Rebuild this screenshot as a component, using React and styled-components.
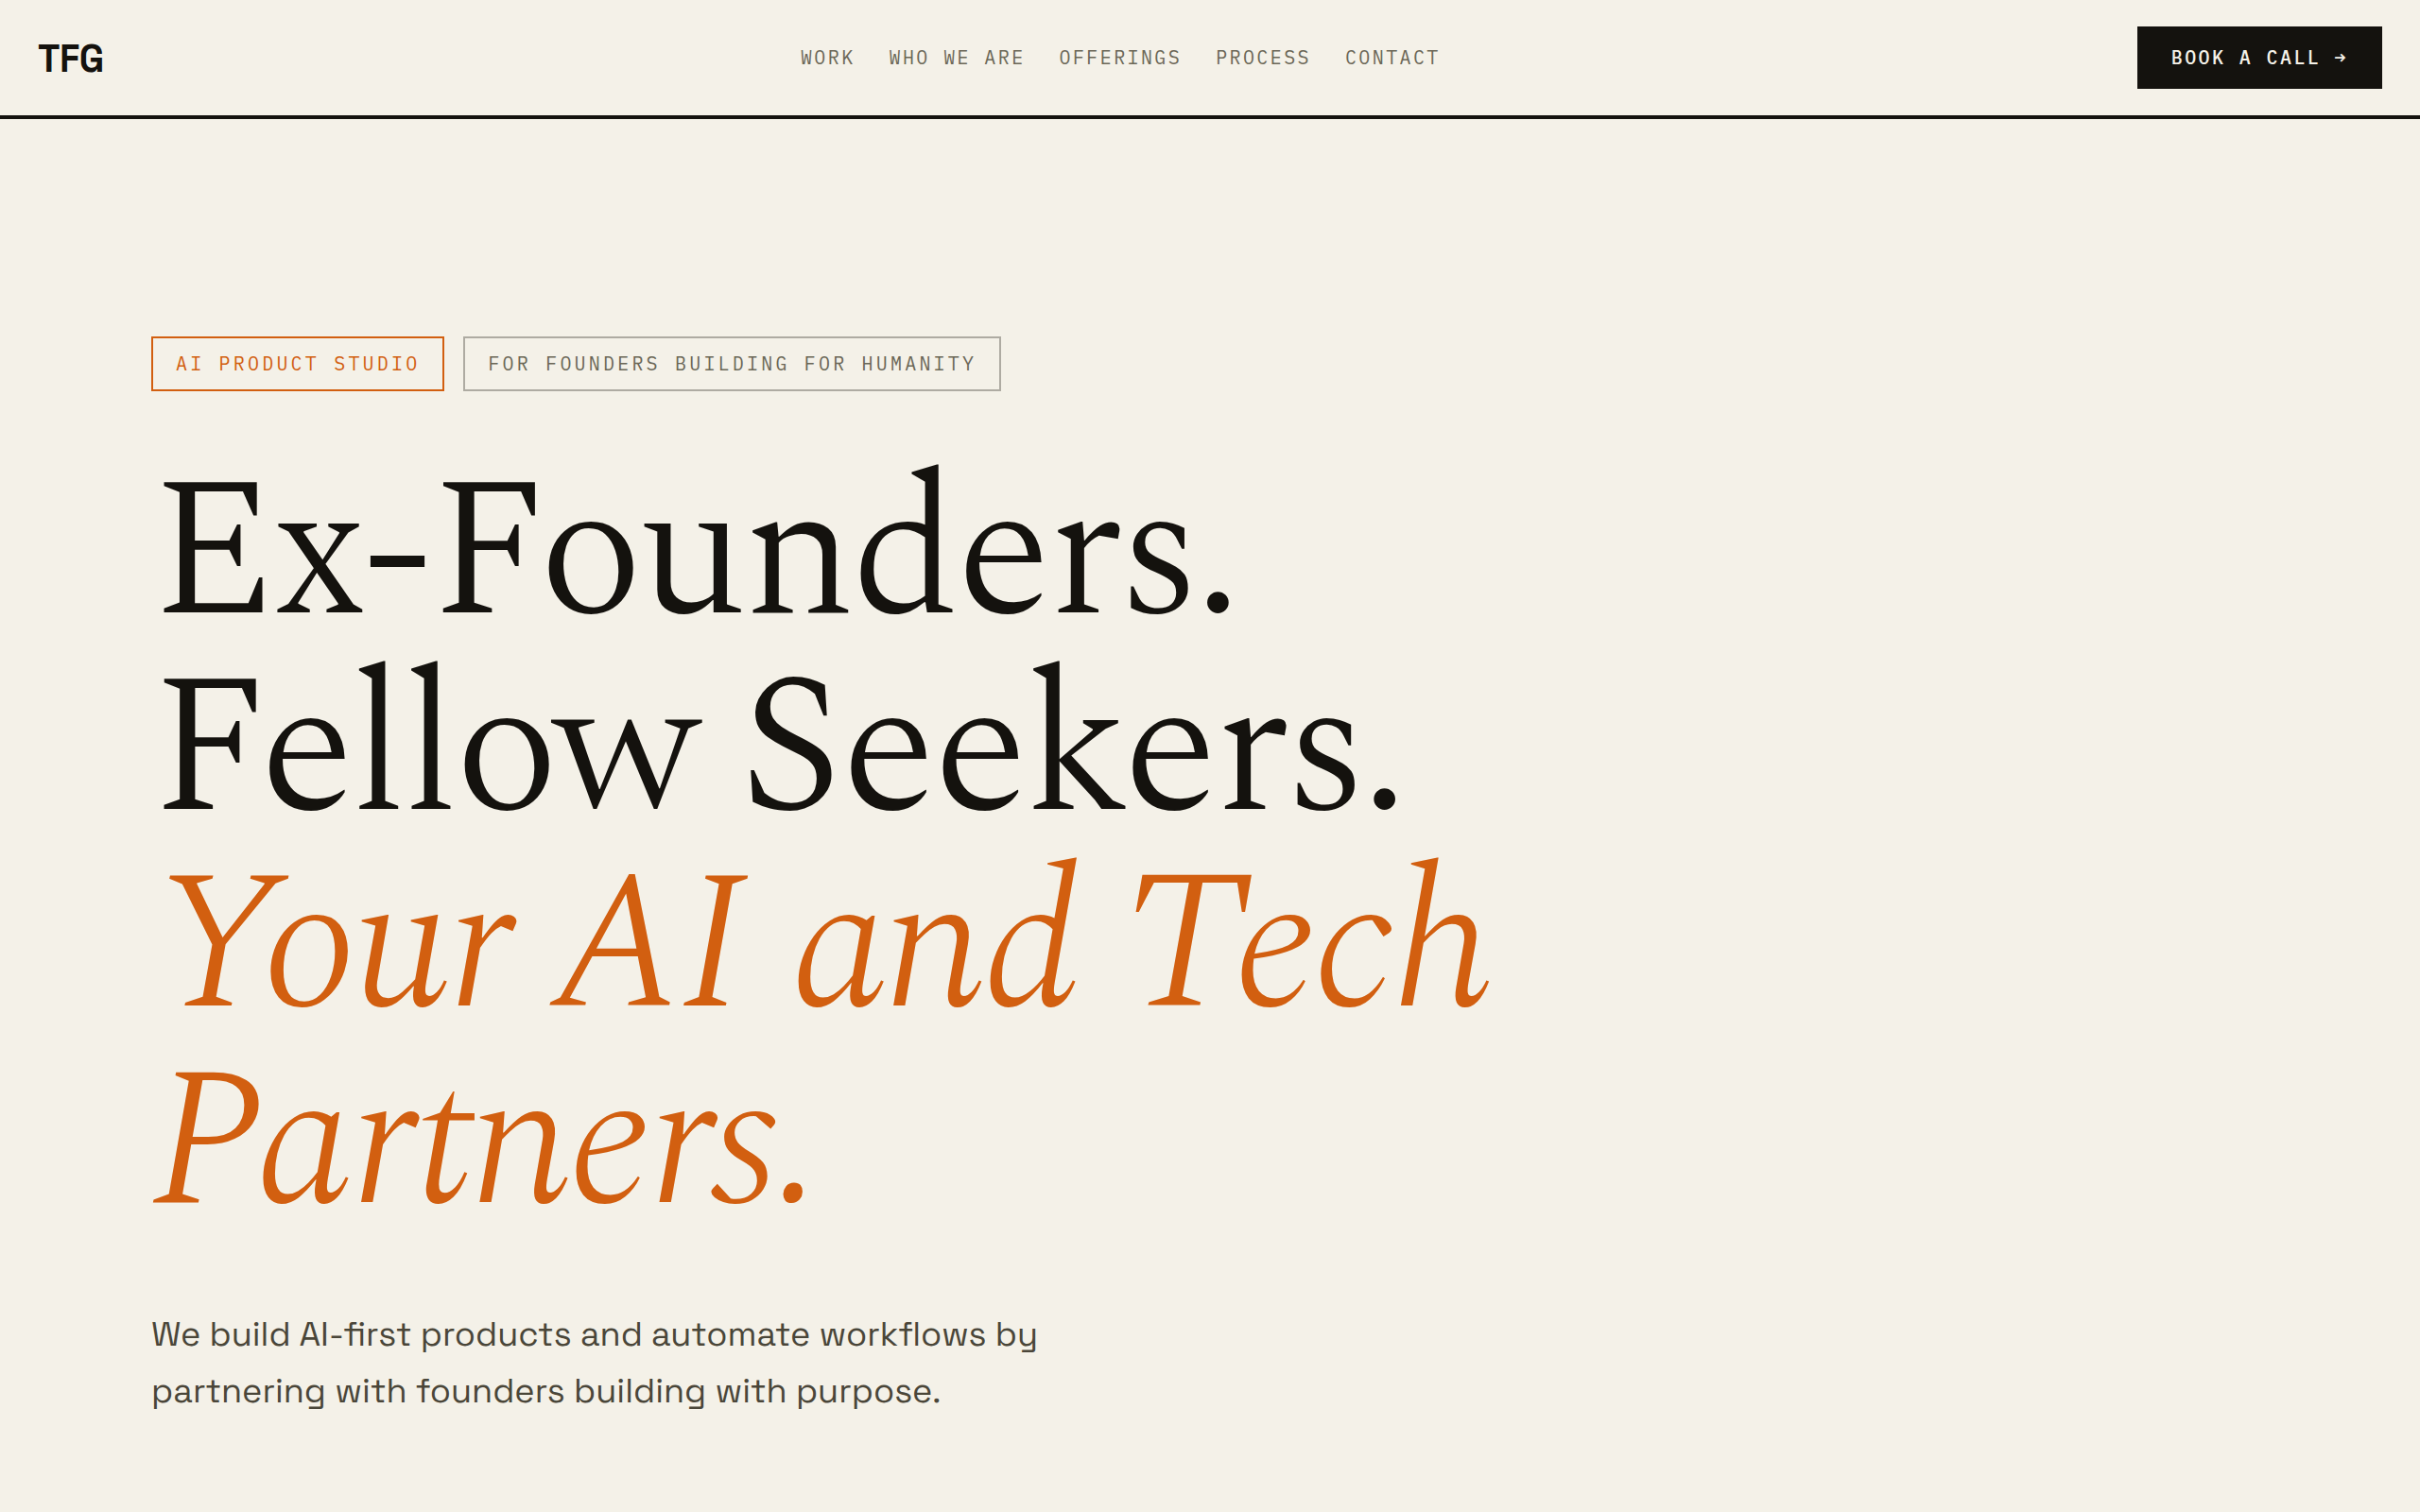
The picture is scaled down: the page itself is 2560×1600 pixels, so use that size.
import React from 'react';
import styled, { createGlobalStyle } from 'styled-components';

const GlobalStyle = createGlobalStyle`
  :root {
    --color-paper: #f4f1e8;
    --color-ink: #14120e;
    --color-text: #4a4639;
    --color-muted: #6b6757;
    --color-border: #aeaba2;
    --color-accent: #d25f10;
    --font-serif: Spectral, 'Liberation Serif', serif;
    --font-sans: 'Space Grotesk', Inter, sans-serif;
    --font-mono: 'IBM Plex Mono', 'DejaVu Sans Mono', monospace;
  }

  * {
    box-sizing: border-box;
  }

  body {
    margin: 0;
    background: var(--color-paper);
    color: var(--color-ink);
    font-family: var(--font-sans);
  }
`;

const Header = styled.header`
  display: flex;
  align-items: center;
  justify-content: space-between;
  padding: 28px 40px;
  border-bottom: 4px solid var(--color-ink);
`;

const Logo = styled.a`
  padding-top: 4px;
  color: var(--color-ink);
  font-size: 40px;
  font-weight: 700;
  line-height: 48px;
  letter-spacing: -0.01em;
  text-decoration: none;
`;

const Nav = styled.nav`
  display: flex;
  gap: 36px;
`;

const NavLink = styled.a`
  color: var(--color-muted);
  font-family: var(--font-mono);
  font-size: 20px;
  line-height: 30px;
  letter-spacing: 0.12em;
  text-transform: uppercase;
  text-decoration: none;

  &:hover {
    color: var(--color-accent);
  }
`;

const CallButton = styled.button`
  padding: 18px 36px;
  border: 0;
  background: var(--color-ink);
  color: var(--color-paper);
  font-family: var(--font-mono);
  font-size: 20px;
  font-weight: 500;
  line-height: 30px;
  letter-spacing: 0.12em;
  text-transform: uppercase;
  cursor: pointer;

  &:hover {
    background: var(--color-accent);
  }
`;

const Hero = styled.main`
  padding: 230px 160px 100px;
`;

const TagList = styled.div`
  display: flex;
  flex-wrap: wrap;
  gap: 20px;
  margin-bottom: 68px;
`;

const Tag = styled.span`
  padding: 12px 24px;
  border: 2px solid ${props => props.$accent ? 'var(--color-accent)' : 'var(--color-border)'};
  color: ${props => props.$accent ? 'var(--color-accent)' : 'var(--color-muted)'};
  font-family: var(--font-mono);
  font-size: 20px;
  line-height: 30px;
  letter-spacing: 0.16em;
  text-transform: uppercase;
`;

const Title = styled.h1`
  max-width: 1600px;
  margin: 0 0 68px;
  font-family: var(--font-serif);
  font-size: 208px;
  font-weight: 300;
  line-height: 1;
  letter-spacing: -0.02em;

  em {
    color: var(--color-accent);
  }
`;

const Lead = styled.p`
  max-width: 1040px;
  margin: 0;
  color: var(--color-text);
  font-size: 36px;
  font-weight: 400;
  line-height: 60px;
`;

const links = [
  { label: 'Work', href: '#work' },
  { label: 'Who we are', href: '#who-we-are' },
  { label: 'Offerings', href: '#offerings' },
  { label: 'Process', href: '#process' },
  { label: 'Contact', href: '#contact' },
];

const App = () => {
  return (
    <>
      <GlobalStyle />
      <Header>
        <Logo href="#top">TFG</Logo>
        <Nav>
          {links.map(link => (
            <NavLink key={link.href} href={link.href}>{link.label}</NavLink>
          ))}
        </Nav>
        <CallButton type="button">Book a call →</CallButton>
      </Header>
      <Hero>
        <TagList>
          <Tag $accent>AI Product Studio</Tag>
          <Tag>For founders building for humanity</Tag>
        </TagList>
        <Title>
          Ex-Founders.
          <br />
          Fellow Seekers.
          <br />
          <em>Your AI and Tech Partners.</em>
        </Title>
        <Lead>
          We build AI-first products and automate workflows by
          partnering with founders building with purpose.
        </Lead>
      </Hero>
    </>
  );
};

export default App;
